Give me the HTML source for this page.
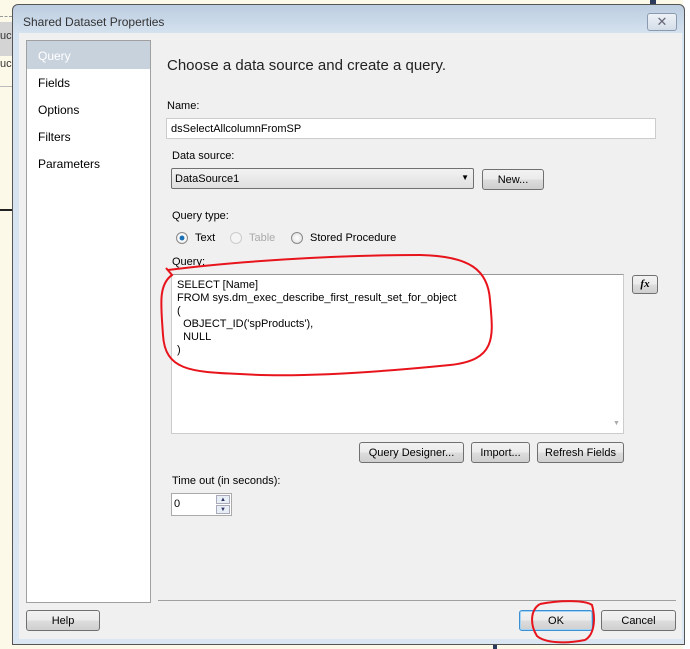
<!DOCTYPE html>
<html><head><style>
*{margin:0;padding:0;box-sizing:border-box}
body{width:690px;height:649px;background:#fdf9e8;position:relative;overflow:hidden;font-family:"Liberation Sans",sans-serif;font-size:11px;color:#000}
.a{position:absolute}
.btn{position:absolute;border:1px solid #707070;border-radius:3px;background:linear-gradient(#f2f2f2,#ebebeb 50%,#dddddd 51%,#cfcfcf);text-align:center;font-size:11px;line-height:20px}
.lbl{position:absolute;font-size:11px}
.radio{position:absolute;width:12px;height:12px;border-radius:50%;border:1px solid #8a8a8a;background:radial-gradient(#fff,#ddd)}
</style></head><body>
<div class="a" style="left:0;top:22px;width:12px;height:34px;background:#d4d4d4"></div>
<div class="a" style="left:0;top:16px;width:12px;height:1px;border-top:1px dashed #999"></div>
<div class="a" style="left:0;top:30px;font-size:11px;color:#333">uc</div>
<div class="a" style="left:0;top:58px;font-size:11px;color:#333">uc</div>
<div class="a" style="left:0;top:86px;width:12px;height:1px;background:#bbb"></div>
<div class="a" style="left:0;top:209px;width:12px;height:2px;background:#222"></div>
<div class="a" style="left:683px;top:0;width:7px;height:649px;background:#fff"></div>
<div class="a" style="left:650px;top:0;width:6px;height:5px;background:#2a3a5a"></div>
<div class="a" style="left:493px;top:643px;width:4px;height:6px;background:#2a3a5a"></div>
<div class="a" style="left:12px;top:4px;width:673px;height:641px;border:1px solid #555;border-radius:6px 6px 0 0;background:linear-gradient(#bccde0,#d6e3f0 30px,#dae6f2)"></div>
<div class="a" style="left:23px;top:15px;font-size:12px;color:#333">Shared Dataset Properties</div>
<div class="a" style="left:647px;top:13px;width:30px;height:18px;border:1px solid #8a9ab0;border-radius:3px;background:linear-gradient(#eef2f7,#d4dde8);text-align:center;font-size:13px;line-height:15px;color:#667">✕</div>
<div class="a" style="left:19px;top:33px;width:663px;height:606px;background:#f0f0f0"></div>
<div class="a" style="left:26px;top:40px;width:125px;height:563px;background:#fff;border:1px solid #a0a0a0"></div>
<div class="a" style="left:27px;top:41px;width:123px;height:28px;background:#c8d2dd"></div>
<div class="lbl" style="left:38px;top:49px;font-size:12px;color:#fff">Query</div>
<div class="lbl" style="left:38px;top:76px;font-size:12px">Fields</div>
<div class="lbl" style="left:38px;top:103px;font-size:12px">Options</div>
<div class="lbl" style="left:38px;top:130px;font-size:12px">Filters</div>
<div class="lbl" style="left:38px;top:157px;font-size:12px">Parameters</div>
<div class="lbl" style="left:167px;top:57px;font-size:15px;color:#222">Choose a data source and create a query.</div>
<div class="lbl" style="left:167px;top:100px">Name:</div>
<div class="a" style="left:166px;top:118px;width:490px;height:21px;background:#fff;border:1px solid #ccc;padding:4px 4px;font-size:11px">dsSelectAllcolumnFromSP</div>
<div class="lbl" style="left:172px;top:150px">Data source:</div>
<div class="a" style="left:171px;top:168px;width:303px;height:21px;border:1px solid #707070;border-radius:2px;background:linear-gradient(#f2f2f2,#e0e0e0);padding:4px 3px;font-size:11px">DataSource1<span style="position:absolute;right:4px;top:4px;font-size:8px">▼</span></div>
<div class="btn" style="left:482px;top:169px;width:62px;height:21px">New...</div>
<div class="lbl" style="left:172px;top:210px">Query type:</div>
<div class="radio" style="left:176px;top:232px;background:radial-gradient(#1a6fb5 30%,#fff 40%,#ddd)"></div>
<div class="lbl" style="left:195px;top:232px">Text</div>
<div class="radio" style="left:230px;top:232px;border-color:#ccc;background:#f4f4f4"></div>
<div class="lbl" style="left:249px;top:232px;color:#aaa">Table</div>
<div class="radio" style="left:291px;top:232px"></div>
<div class="lbl" style="left:310px;top:232px">Stored Procedure</div>
<div class="lbl" style="left:172px;top:256px">Query:</div>
<div class="a" style="left:171px;top:274px;width:453px;height:160px;background:#fff;border:1px solid #ccc;border-top-color:#999;padding:4px 5px;font-size:11px;line-height:13px;white-space:pre">SELECT [Name]
FROM sys.dm_exec_describe_first_result_set_for_object
(
  OBJECT_ID('spProducts'),
  NULL
)</div>
<div class="a" style="left:613px;top:420px;font-size:7px;color:#aaa">▼</div>
<div class="btn" style="left:632px;top:275px;width:26px;height:19px;line-height:17px;font-style:italic;font-family:'Liberation Serif',serif;font-weight:bold">fx</div>
<div class="btn" style="left:359px;top:442px;width:105px;height:21px">Query Designer...</div>
<div class="btn" style="left:471px;top:442px;width:59px;height:21px">Import...</div>
<div class="btn" style="left:537px;top:442px;width:87px;height:21px">Refresh Fields</div>
<div class="lbl" style="left:172px;top:475px">Time out (in seconds):</div>
<div class="a" style="left:171px;top:493px;width:61px;height:23px;background:#fff;border:1px solid #aaa;padding:4px 2px;font-size:11px">0</div>
<div class="a" style="left:216px;top:495px;width:14px;height:9px;border:1px solid #aab;background:#e8eef5;font-size:6px;text-align:center;line-height:8px;color:#336">▲</div>
<div class="a" style="left:216px;top:505px;width:14px;height:9px;border:1px solid #aab;background:#e8eef5;font-size:6px;text-align:center;line-height:8px;color:#336">▼</div>
<div class="a" style="left:158px;top:600px;width:518px;height:1px;background:#a0a0a0"></div>
<div class="btn" style="left:26px;top:610px;width:74px;height:21px">Help</div>
<div class="btn" style="left:519px;top:610px;width:74px;height:21px;border-color:#3c8fd0;box-shadow:inset 0 0 0 1px #9fd3f7">OK</div>
<div class="btn" style="left:601px;top:610px;width:75px;height:21px">Cancel</div>
<svg class="a" style="left:0;top:0" width="690" height="649">
<path d="M168,270 C230,262 330,255 420,255 C470,256 488,270 490,300 C493,335 498,360 450,365 C380,372 300,378 240,374 C190,372 165,370 163,335 C161,305 158,285 172,275 L166,268" fill="none" stroke="#e8141c" stroke-width="2"/>
<path d="M540,604 C560,600 585,600 592,605 C596,620 594,635 585,640 C565,644 545,643 537,636 C530,625 530,610 540,604" fill="none" stroke="#e8141c" stroke-width="2"/>
</svg>
</body></html>
